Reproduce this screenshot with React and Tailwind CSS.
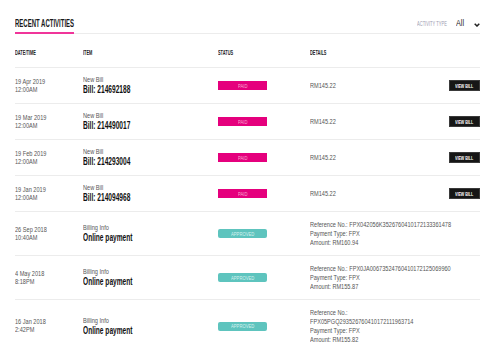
import React from "react";

function Small({ children, className = "" }) {
  return (
    <div className={"block origin-left scale-x-[0.8] whitespace-nowrap text-[7px] leading-[8px] text-[#555] " + className}>
      {children}
    </div>
  );
}

function Detail({ children }) {
  return (
    <div className="block origin-left scale-x-[0.8] whitespace-nowrap text-[7px] leading-[9px] text-[#555]">
      {children}
    </div>
  );
}

function Big({ children }) {
  return (
    <div className="block origin-left scale-x-[0.6] whitespace-nowrap text-[11px] leading-[11px] font-bold text-[#111]">
      {children}
    </div>
  );
}

function HeadLabel({ children }) {
  return (
    <div className="block origin-left scale-x-[0.56] whitespace-nowrap text-[7px] leading-[7px] font-bold text-[#222]">
      {children}
    </div>
  );
}

function PaidBadge() {
  return (
    <div className="flex h-[9px] w-[49px] items-center justify-center bg-[#e5007d]">
      <span className="inline-block scale-x-[0.7] whitespace-nowrap text-[6px] leading-[6px] text-[#f7a6cf]">PAID</span>
    </div>
  );
}

function ApprovedBadge() {
  return (
    <div className="flex h-[9px] w-[49px] items-center justify-center rounded-[2px] bg-[#5ec4be]">
      <span className="inline-block scale-x-[0.7] whitespace-nowrap text-[6px] leading-[6px] text-[#d4f1ee]">APPROVED</span>
    </div>
  );
}

function BillRow({ date, time, bill }) {
  return (
    <div className="flex h-[36px] items-center border-b border-[#ececec]">
      <div className="w-[68px] shrink-0">
        <Small>{date}</Small>
        <Small>{time}</Small>
      </div>
      <div className="w-[135px] shrink-0">
        <Small>New Bill</Small>
        <Big>Bill: {bill}</Big>
      </div>
      <div className="w-[92px] shrink-0">
        <PaidBadge />
      </div>
      <div className="min-w-0 flex-1">
        <Small>RM145.22</Small>
      </div>
      <div className="flex h-[11px] w-[31px] shrink-0 items-center justify-center border border-[#3a3a3a] bg-[#161616]">
        <span className="inline-block scale-x-[0.6] whitespace-nowrap text-[6px] font-bold leading-[6px] text-white">VIEW BILL</span>
      </div>
    </div>
  );
}

function PayRow({ date, time, lines }) {
  return (
    <div className="flex items-center border-b border-[#ececec] py-[8px]">
      <div className="w-[68px] shrink-0">
        <Small>{date}</Small>
        <Small>{time}</Small>
      </div>
      <div className="w-[135px] shrink-0">
        <Small>Billing Info</Small>
        <Big>Online payment</Big>
      </div>
      <div className="w-[92px] shrink-0">
        <ApprovedBadge />
      </div>
      <div className="min-w-0 flex-1">
        {lines.map((l, i) => (
          <Detail key={i}>{l}</Detail>
        ))}
      </div>
    </div>
  );
}

export default function App() {
  return (
    <div className="h-[346px] w-[500px] overflow-hidden bg-white pl-[15px] pr-[20px] font-['Liberation_Sans',Arial,sans-serif]">
      <div className="flex items-start justify-between border-b border-[#ececec] pt-[19px]">
        <div className="-mb-px w-[59px] shrink-0 border-b-2 border-[#f0359a] pb-[3px]">
          <div className="block origin-left scale-x-[0.6] whitespace-nowrap text-[10px] font-bold leading-[10px] text-[#1a1a1a]">
            RECENT ACTIVITIES
          </div>
        </div>
        <div className="flex shrink-0 items-start">
          <div className="mt-[1px] w-[31px] shrink-0">
            <div className="block origin-left scale-x-[0.58] whitespace-nowrap text-[7px] leading-[7px] text-[#9c9cb0]">
              ACTIVITY TYPE
            </div>
          </div>
          <div className="ml-[8px] w-[10px] shrink-0">
            <div className="block origin-left scale-x-[0.8] whitespace-nowrap text-[9px] leading-[9px] text-[#222]">All</div>
          </div>
          <div className="ml-[8px] mt-[4px] w-[6px] shrink-0">
            <svg width="6" height="4" viewBox="0 0 6 4">
              <polyline points="0.7,0.7 3,3 5.3,0.7" fill="none" stroke="#222" strokeWidth="1.5" />
            </svg>
          </div>
        </div>
      </div>

      <div className="flex h-[34px] items-start border-b border-[#ececec] pt-[15px]">
        <div className="w-[68px] shrink-0">
          <HeadLabel>DATE/TIME</HeadLabel>
        </div>
        <div className="w-[135px] shrink-0">
          <HeadLabel>ITEM</HeadLabel>
        </div>
        <div className="w-[92px] shrink-0">
          <HeadLabel>STATUS</HeadLabel>
        </div>
        <div className="min-w-0 flex-1">
          <HeadLabel>DETAILS</HeadLabel>
        </div>
      </div>

      <BillRow date="19 Apr 2019" time="12:00AM" bill="214692188" />
      <BillRow date="19 Mar 2019" time="12:00AM" bill="214490017" />
      <BillRow date="19 Feb 2019" time="12:00AM" bill="214293004" />
      <BillRow date="19 Jan 2019" time="12:00AM" bill="214094968" />

      <PayRow
        date="26 Sep 2018"
        time="10:40AM"
        lines={[
          "Reference No.: FPX042056K3526760410172133361478",
          "Payment Type: FPX",
          "Amount: RM160.94",
        ]}
      />
      <PayRow
        date="4 May 2018"
        time="8:18PM"
        lines={[
          "Reference No.: FPX0JA00673524760410172125069960",
          "Payment Type: FPX",
          "Amount: RM155.87",
        ]}
      />
      <PayRow
        date="16 Jan 2018"
        time="2:42PM"
        lines={[
          "Reference No.:",
          "FPX05PGQ293526760410172111963714",
          "Payment Type: FPX",
          "Amount: RM155.82",
        ]}
      />
    </div>
  );
}
